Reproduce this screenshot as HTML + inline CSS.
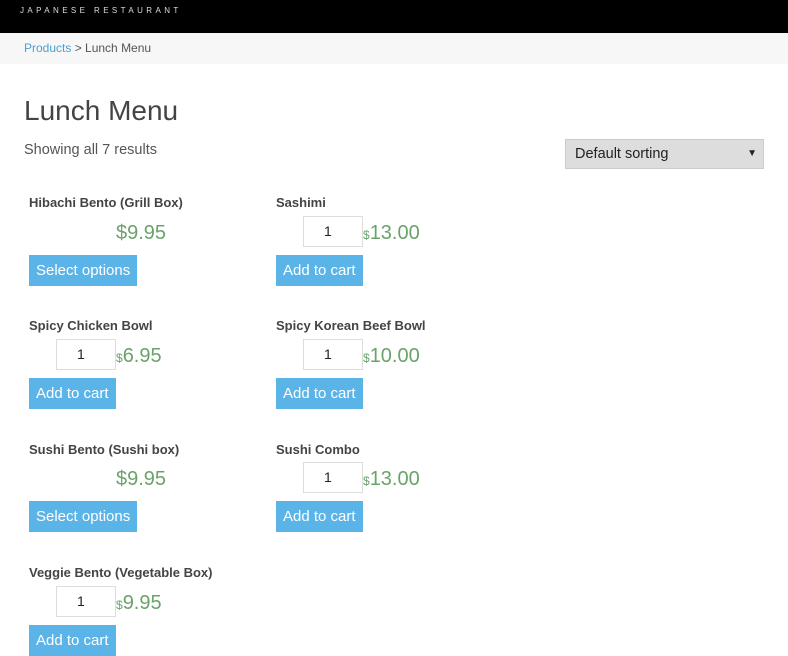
<!DOCTYPE html><html><head><style>
body{margin:0;width:788px;height:630px;overflow:hidden;background:#fff;font-family:"Liberation Sans",sans-serif;position:relative}
.a{position:absolute;white-space:nowrap}
.n{font-size:13px;font-weight:bold;color:#444}
.p{font-size:20px;color:#6aa36a}
.p small{font-size:12px}
.q{width:60px;height:31px;border:1px solid #ddd;box-sizing:border-box;font-size:14px;color:#222;padding-left:20px;line-height:29px;background:#fff}
.b{background:#5bb4e8;color:#fff;font-size:15px;height:31px;line-height:31px;padding:0 7px}
</style></head><body>
<div class="a" style="left:0;top:0;width:788px;height:33px;background:#000"></div>
<div class="a" style="left:20px;top:6px;color:#ddd;font-size:8px;letter-spacing:3.4px">JAPANESE RESTAURANT</div>
<div class="a" style="left:0;top:33px;width:788px;height:31px;background:#f7f7f7"></div>
<div class="a" style="left:24px;top:41px;font-size:12px;color:#555"><span style="color:#4a9fd4">Products</span> &gt; Lunch Menu</div>
<div class="a" style="left:24px;top:95px;font-size:28px;color:#444">Lunch Menu</div>
<div class="a" style="left:24px;top:142px;font-size:14.5px;color:#555">Showing all 7 results</div>
<div class="a" style="left:565px;top:139px;background:#ddd;border:1px solid #ccc;font-size:14.5px;line-height:28px;color:#222;padding-left:9px;box-sizing:border-box;width:199px;height:30px">Default sorting<span style="position:absolute;right:6px;top:0;font-size:10px">▼</span></div>

<div class="a n" style="left:29px;top:195px">Hibachi Bento (Grill Box)</div>
<div class="a p" style="left:116px;top:222px">$9.95</div>
<div class="a b" style="left:29px;top:255px">Select options</div>
<div class="a n" style="left:276px;top:195px">Sashimi</div>
<div class="a q" style="left:303px;top:216px">1</div>
<div class="a p" style="left:363px;top:222px"><small>$</small>13.00</div>
<div class="a b" style="left:276px;top:255px">Add to cart</div>

<div class="a n" style="left:29px;top:318px">Spicy Chicken Bowl</div>
<div class="a q" style="left:56px;top:339px">1</div>
<div class="a p" style="left:116px;top:345px"><small>$</small>6.95</div>
<div class="a b" style="left:29px;top:378px">Add to cart</div>
<div class="a n" style="left:276px;top:318px">Spicy Korean Beef Bowl</div>
<div class="a q" style="left:303px;top:339px">1</div>
<div class="a p" style="left:363px;top:345px"><small>$</small>10.00</div>
<div class="a b" style="left:276px;top:378px">Add to cart</div>

<div class="a n" style="left:29px;top:442px">Sushi Bento (Sushi box)</div>
<div class="a p" style="left:116px;top:468px">$9.95</div>
<div class="a b" style="left:29px;top:501px">Select options</div>
<div class="a n" style="left:276px;top:442px">Sushi Combo</div>
<div class="a q" style="left:303px;top:462px">1</div>
<div class="a p" style="left:363px;top:468px"><small>$</small>13.00</div>
<div class="a b" style="left:276px;top:501px">Add to cart</div>

<div class="a n" style="left:29px;top:565px">Veggie Bento (Vegetable Box)</div>
<div class="a q" style="left:56px;top:586px">1</div>
<div class="a p" style="left:116px;top:592px"><small>$</small>9.95</div>
<div class="a b" style="left:29px;top:625px">Add to cart</div>
</body></html>
